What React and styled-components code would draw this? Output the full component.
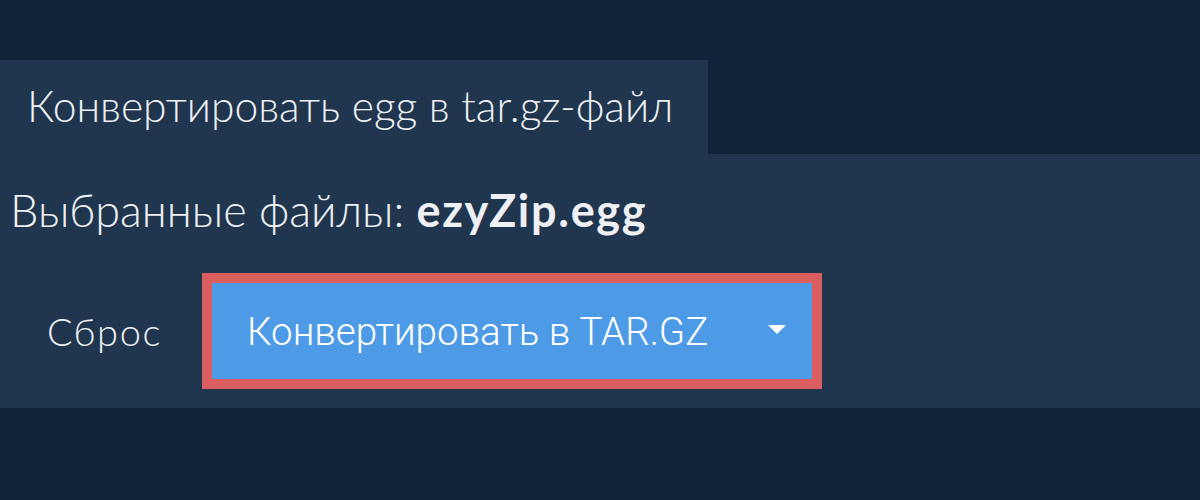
import React from "react";
import styled, { createGlobalStyle } from "styled-components";

const Global = createGlobalStyle`
  html, body { margin: 0; padding: 0; background: #0f2339; }
  body { width: 1200px; height: 500px; overflow: hidden; font-family: Lato, "Noto Sans", sans-serif; }
`;

const Page = styled.div`
  padding-top: 60px;
  width: 1200px;
  height: 500px;
  box-sizing: border-box;
  background: #0f2339;
`;

const Tab = styled.div`
  display: flex;
  align-items: center;
  height: 94px;
  width: 708px;
  box-sizing: border-box;
  padding: 0 0 4px 27px;
  background: #20364f;
  color: #eef0f3;
  font-family: Lato, sans-serif;
  font-weight: 300;
  font-size: 42.6px;
`;

const Panel = styled.div`
  background: #20364f;
  height: 254px;
  display: flex;
  flex-direction: column;
`;

const Files = styled.div`
  padding: 24px 0 0 10px;
  height: 64px;
  display: flex;
  align-items: center;
  color: #eef0f3;
  font-family: Lato, sans-serif;
  font-weight: 300;
  font-size: 45px;
  white-space: pre;
`;

const Bold = styled.span`
  font-weight: 700;
  letter-spacing: 1.7px;
`;

const Actions = styled.div`
  display: flex;
  align-items: center;
  margin-top: 31px;
  padding-left: 47px;
  gap: 41px;
`;

const Reset = styled.span`
  color: #eef0f3;
  font-family: Lato, sans-serif;
  font-weight: 300;
  font-size: 38px;
  letter-spacing: 1.6px;
  width: 114px;
`;

const Outline = styled.div`
  border: 10px solid #dc5f5f;
  display: flex;
`;

const ConvertButton = styled.button`
  display: flex;
  align-items: center;
  justify-content: space-between;
  width: 600px;
  height: 96px;
  box-sizing: border-box;
  padding: 0 26px 0 35px;
  background: #4d9be6;
  border: none;
  color: #ffffff;
  font-family: Roboto, sans-serif;
  font-weight: 300;
  font-size: 38.5px;
  cursor: pointer;
`;

const Caret = styled.svg`
  width: 18px;
  height: 9px;
  display: block;
  margin-top: -4px;
`;

export default function App() {
  return (
    <>
      <Global />
      <Page>
        <Tab>Конвертировать egg в tar.gz-файл</Tab>
        <Panel>
          <Files>
            Выбранные файлы: <Bold>ezyZip.egg</Bold>
          </Files>
          <Actions>
            <Reset>Сброс</Reset>
            <Outline>
              <ConvertButton>
                <span>Конвертировать в TAR.GZ</span>
                <Caret viewBox="0 0 18 9">
                  <path d="M0 0 H18 L9 9 Z" fill="#ffffff" />
                </Caret>
              </ConvertButton>
            </Outline>
          </Actions>
        </Panel>
      </Page>
    </>
  );
}
